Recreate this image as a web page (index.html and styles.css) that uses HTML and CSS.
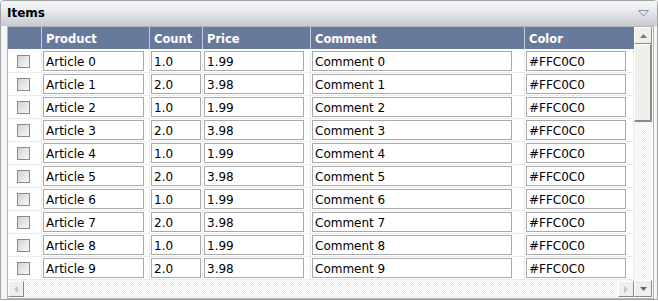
FILE: index.html
```html
<!DOCTYPE html>
<html>
<head>
<meta charset="utf-8">
<link rel="stylesheet" href="styles.css">
</head>
<body>
<div class="panel">
  <div class="title">
    <span class="title-text">Items</span>
    <svg class="collapse" width="11" height="7" viewBox="0 0 11 7"><path d="M0.5 0.5 H10.5 L5.5 6 Z" fill="none" stroke="#8a93a3" stroke-width="1"/></svg>
  </div>
  <div class="frame">
    <div class="grid">
      <div class="hc"></div><div class="hc">Product</div><div class="hc">Count</div><div class="hc">Price</div><div class="hc">Comment</div><div class="hc">Color</div>

      <div class="c cb"><span class="chk"></span></div><div class="c"><span class="in w101">Article 0</span></div><div class="c"><span class="in w50">1.0</span></div><div class="c"><span class="in w100">1.99</span></div><div class="c"><span class="in w200">Comment 0</span></div><div class="c"><span class="in w100">#FFC0C0</span></div>
      <div class="c cb"><span class="chk"></span></div><div class="c"><span class="in w101">Article 1</span></div><div class="c"><span class="in w50">2.0</span></div><div class="c"><span class="in w100">3.98</span></div><div class="c"><span class="in w200">Comment 1</span></div><div class="c"><span class="in w100">#FFC0C0</span></div>
      <div class="c cb"><span class="chk"></span></div><div class="c"><span class="in w101">Article 2</span></div><div class="c"><span class="in w50">1.0</span></div><div class="c"><span class="in w100">1.99</span></div><div class="c"><span class="in w200">Comment 2</span></div><div class="c"><span class="in w100">#FFC0C0</span></div>
      <div class="c cb"><span class="chk"></span></div><div class="c"><span class="in w101">Article 3</span></div><div class="c"><span class="in w50">2.0</span></div><div class="c"><span class="in w100">3.98</span></div><div class="c"><span class="in w200">Comment 3</span></div><div class="c"><span class="in w100">#FFC0C0</span></div>
      <div class="c cb"><span class="chk"></span></div><div class="c"><span class="in w101">Article 4</span></div><div class="c"><span class="in w50">1.0</span></div><div class="c"><span class="in w100">1.99</span></div><div class="c"><span class="in w200">Comment 4</span></div><div class="c"><span class="in w100">#FFC0C0</span></div>
      <div class="c cb"><span class="chk"></span></div><div class="c"><span class="in w101">Article 5</span></div><div class="c"><span class="in w50">2.0</span></div><div class="c"><span class="in w100">3.98</span></div><div class="c"><span class="in w200">Comment 5</span></div><div class="c"><span class="in w100">#FFC0C0</span></div>
      <div class="c cb"><span class="chk"></span></div><div class="c"><span class="in w101">Article 6</span></div><div class="c"><span class="in w50">1.0</span></div><div class="c"><span class="in w100">1.99</span></div><div class="c"><span class="in w200">Comment 6</span></div><div class="c"><span class="in w100">#FFC0C0</span></div>
      <div class="c cb"><span class="chk"></span></div><div class="c"><span class="in w101">Article 7</span></div><div class="c"><span class="in w50">2.0</span></div><div class="c"><span class="in w100">3.98</span></div><div class="c"><span class="in w200">Comment 7</span></div><div class="c"><span class="in w100">#FFC0C0</span></div>
      <div class="c cb"><span class="chk"></span></div><div class="c"><span class="in w101">Article 8</span></div><div class="c"><span class="in w50">1.0</span></div><div class="c"><span class="in w100">1.99</span></div><div class="c"><span class="in w200">Comment 8</span></div><div class="c"><span class="in w100">#FFC0C0</span></div>
      <div class="c cb"><span class="chk"></span></div><div class="c"><span class="in w101">Article 9</span></div><div class="c"><span class="in w50">2.0</span></div><div class="c"><span class="in w100">3.98</span></div><div class="c"><span class="in w200">Comment 9</span></div><div class="c"><span class="in w100">#FFC0C0</span></div>
    </div>
    <div class="vscroll">
      <div class="sbtn"><svg width="7" height="4" viewBox="0 0 7 4"><path d="M0 4 H7 L3.5 0 Z" fill="#7a7a7a"/></svg></div>
      <div class="thumb"></div>
      <div class="track"></div>
    </div>
    <div class="hscroll">
      <div class="sbtn hbtn"><svg width="4" height="7" viewBox="0 0 4 7"><path d="M4 0 V7 L0 3.5 Z" fill="#c4c4c4"/></svg></div>
      <div class="htrack"></div>
      <div class="sbtn hbtn"><svg width="4" height="7" viewBox="0 0 4 7"><path d="M0 0 V7 L4 3.5 Z" fill="#c4c4c4"/></svg></div>
    </div>
    <div class="corner">
      <div class="sbtn"><svg width="7" height="4" viewBox="0 0 7 4"><path d="M0 0 H7 L3.5 4 Z" fill="#6a6a6a"/></svg></div>
    </div>
  </div>
</div>
</body>
</html>
```
FILE: styles.css
```css
html, body {
  margin: 0;
  padding: 0;
  background: #ffffff;
}
body {
  font-family: "DejaVu Sans", Verdana, sans-serif;
  font-size: 12px;
  color: #000;
}
.panel {
  box-sizing: border-box;
  width: 658px;
  height: 300px;
  border: 1px solid #a3a3a3;
  border-radius: 4px 4px 0 0;
  background: #f6f6f6;
  display: flex;
  flex-direction: column;
  padding: 0 3px 0 6px;
}
.title {
  height: 25px;
  margin: 0 -3px 0 -6px;
  padding: 0 8px 0 6px;
  display: flex;
  align-items: center;
  justify-content: space-between;
  background: linear-gradient(#f5f6f8, #eceef1 30%, #c6c9d0);
  border-radius: 3px 3px 0 0;
}
.title-text {
  font-weight: bold;
  font-size: 12px;
  color: #000;
  margin-top: -1px;
}
.collapse {
  display: block;
  margin-top: 0px;
}
.frame {
  flex: 1;
  border: 1px solid #b5b5b5;
  background: #fff;
  display: grid;
  grid-template-columns: 626px 19px;
  grid-template-rows: 253px 18px;
}
.grid {
  display: grid;
  grid-template-columns: 34px 108px 53px 108px 214px 109px;
  grid-auto-rows: 23px;
  align-content: start;
  background: #fff;
}
.hc {
  box-sizing: border-box;
  background: #687a9c;
  color: #fff;
  font-weight: bold;
  font-size: 11.5px;
  border-right: 1px solid #c5cbd8;
  border-bottom: 1px solid #fff;
  padding: 5px 0 0 4px;
  height: 23px;
  white-space: nowrap;
}
.hc:nth-child(6) { border-right: 0; }
.c {
  box-sizing: border-box;
  border-right: 1px solid #ececec;
  border-bottom: 1px solid #ececec;
  padding: 1px 0 0 1px;
}
.cb {
  padding: 5px 0 0 9px;
}
.chk {
  display: block;
  box-sizing: border-box;
  width: 13px;
  height: 13px;
  border: 1px solid #8a8a8a;
  background: linear-gradient(135deg, #d2d2d2, #f8f8f8);
}
.in {
  display: block;
  box-sizing: border-box;
  height: 20px;
  border: 1px solid #a9a9a9;
  background: #fff;
  padding: 2px 0 0 2px;
  line-height: 16px;
  white-space: nowrap;
  overflow: hidden;
}
.w101 { width: 101px; }
.w50 { width: 50px; }
.w100 { width: 100px; }
.w200 { width: 200px; }
.vscroll {
  display: flex;
  flex-direction: column;
  padding-top: 0;
}
.sbtn {
  box-sizing: border-box;
  height: 17px;
  width: 18px;
  background: #eeeeea;
  border-top: 1px solid #ffffff;
  border-left: 1px solid #ffffff;
  border-right: 1px solid #8a8a8a;
  border-bottom: 1px solid #8a8a8a;
  display: flex;
  align-items: center;
  justify-content: center;
}
.sbtn svg { display: block; }
.thumb {
  box-sizing: border-box;
  height: 78px;
  width: 18px;
  background: #eff0ec;
  border-top: 1px solid #ffffff;
  border-left: 1px solid #ffffff;
  border-right: 2px solid #8a8a8a;
  border-bottom: 2px solid #8a8a8a;
}
.track, .htrack {
  flex: 1;
  background-color: #ffffff;
  background-image: repeating-conic-gradient(#eeeeec 0 25%, #ffffff 0 50%);
  background-size: 2px 2px;
}
.track { width: 18px; }
.hscroll {
  display: flex;
  align-items: flex-end;
  background-image: repeating-conic-gradient(#eeeeec 0 25%, #ffffff 0 50%);
  background-size: 2px 2px;
  padding-bottom: 1px;
}
.hbtn {
  width: 16px;
  height: 16px;
}
.htrack {
  align-self: stretch;
}
.corner {
  display: flex;
  align-items: flex-end;
  background-image: repeating-conic-gradient(#eeeeec 0 25%, #ffffff 0 50%);
  background-size: 2px 2px;
  padding-bottom: 1px;
}
```
